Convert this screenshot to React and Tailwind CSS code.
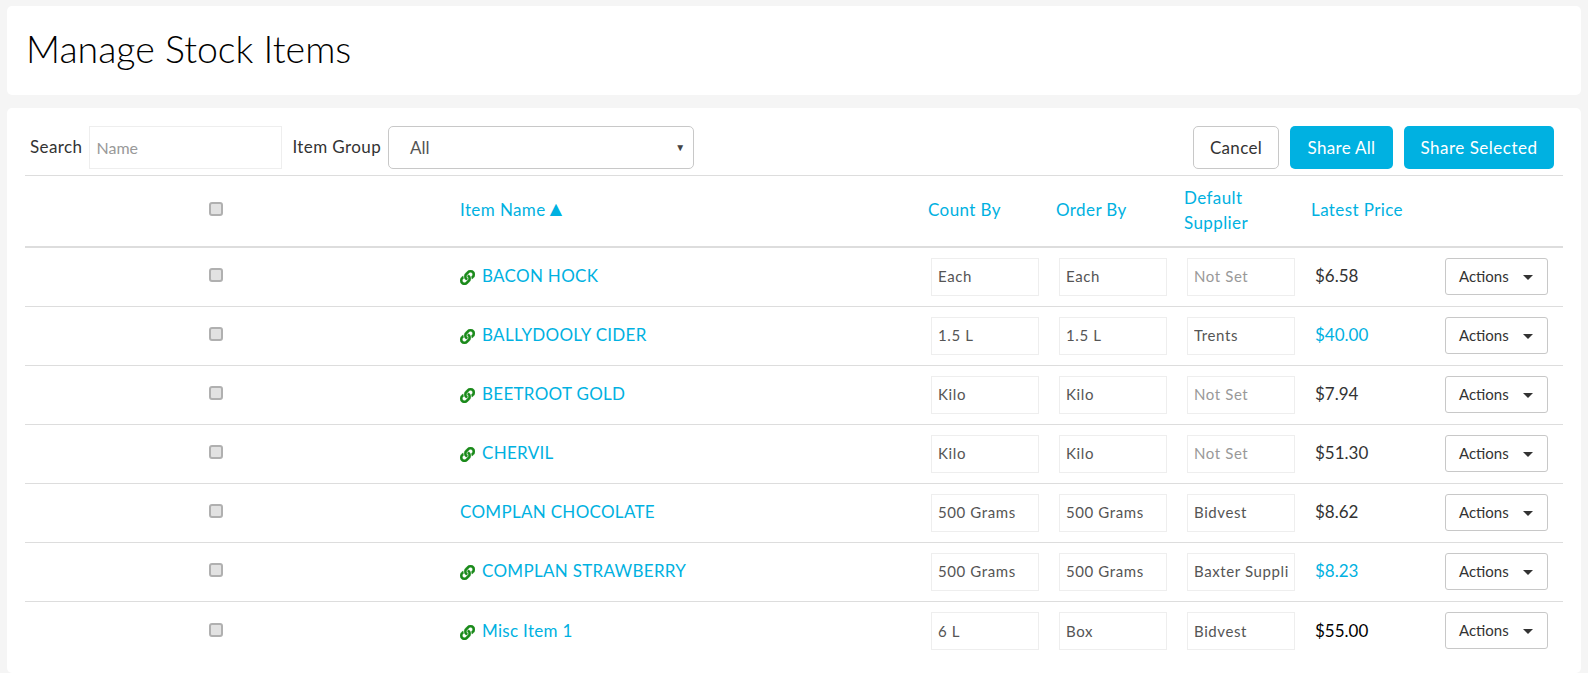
import { FaLink } from 'react-icons/fa'

const items = [
  { name: 'BACON HOCK', linked: true, count: 'Each', order: 'Each', supplier: '', price: '$6.58', tone: 'text-[#333]' },
  { name: 'BALLYDOOLY CIDER', linked: true, count: '1.5 L', order: '1.5 L', supplier: 'Trents', price: '$40.00', tone: 'text-[#00b1e1]' },
  { name: 'BEETROOT GOLD', linked: true, count: 'Kilo', order: 'Kilo', supplier: '', price: '$7.94', tone: 'text-[#333]' },
  { name: 'CHERVIL', linked: true, count: 'Kilo', order: 'Kilo', supplier: '', price: '$51.30', tone: 'text-[#333]' },
  { name: 'COMPLAN CHOCOLATE', linked: false, count: '500 Grams', order: '500 Grams', supplier: 'Bidvest', price: '$8.62', tone: 'text-[#333]' },
  { name: 'COMPLAN STRAWBERRY', linked: true, count: '500 Grams', order: '500 Grams', supplier: 'Baxter Supplies', price: '$8.23', tone: 'text-[#00b1e1]' },
  { name: 'Misc Item 1', linked: true, count: '6 L', order: 'Box', supplier: 'Bidvest', price: '$55.00', tone: 'text-black' },
]

const cols = 'grid grid-cols-[381px_522px_128px_128px_128px_133px_116px] items-center'

function Check() {
  return <input type="checkbox" readOnly className="appearance-none block w-[14px] h-[14px] mx-auto mb-[4px] rounded-[3px] border-2 border-[#b0b0b0] bg-[#e2e2e2]" />
}

function Field({ value, placeholder }) {
  return (
    <input
      readOnly
      value={value}
      placeholder={placeholder}
      className="w-[108px] h-[38px] ml-[3px] mb-[1px] border border-[#eeeeee] bg-white px-[6px] pb-[1px] text-[15px] tracking-[0.6px] text-[#555] placeholder:text-[#999] outline-none"
    />
  )
}

export default function App() {
  return (
    <div className="h-[673px] overflow-hidden bg-[#f5f5f5] px-[7px] pt-[6px] font-['Lato','Liberation_Sans',sans-serif]">
      <div className="h-[89px] rounded-[5px] bg-white pl-[19px] pt-[20px]">
        <h1 className="text-[37.5px] leading-[46px] font-light text-black">Manage Stock Items</h1>
      </div>

      <div className="mt-[13px] h-[565px] rounded-[5px] bg-white px-[18px] pt-[18px] pb-4">
        {/* Toolbar */}
        <div className="flex items-center h-[43px] mb-[6px]">
          <label className="ml-[5px] mr-[7px] mb-[2px] text-[17px] tracking-[0.4px] text-[#333]">Search</label>
          <input placeholder="Name" className="w-[193px] h-[43px] border border-[#eeeeee] px-[6px] text-[16px] outline-none placeholder:text-[#999]" />
          <label className="ml-[10px] mr-[7px] mb-[2px] text-[17px] tracking-[0.4px] text-[#333]">Item Group</label>
          <div className="relative w-[306px] h-[43px] rounded-[5px] border border-[#c8c8c8] flex items-center pl-[21px] text-[17px] text-[#555]">
            All
            <span className="absolute right-[8px] top-[13px] text-[10px] text-[#444]">▼</span>
          </div>
          <div className="ml-auto flex gap-[11px] mr-[9px]">
            <button className="w-[86px] h-[43px] rounded-[5px] border border-[#c8c8c8] bg-white text-[17px] tracking-[0.3px] text-[#333]">Cancel</button>
            <button className="w-[103px] h-[43px] rounded-[5px] bg-[#00b1e1] text-[17px] tracking-[0.3px] text-white">Share All</button>
            <button className="w-[150px] h-[43px] rounded-[5px] bg-[#00b1e1] text-[17px] tracking-[0.5px] text-white">Share Selected</button>
          </div>
        </div>

        {/* Header */}
        <div className={`${cols} h-[73px] border-t border-b-2 border-[#dddddd] text-[17px] tracking-[0.4px] text-[#00b1e1]`}>
          <Check />
          <div className="pl-[54px] mb-[3px]">Item Name<span className="text-[21px] leading-none tracking-normal">▲</span></div>
          <div className="mb-[3px]">Count By</div>
          <div className="mb-[3px]">Order By</div>
          <div className="leading-[25px] mb-[3px]">Default<br />Supplier</div>
          <div className="mb-[3px] -ml-[1px]">Latest Price</div>
          <div />
        </div>

        {/* Rows */}
        {items.map(item => (
          <div key={item.name} className={`${cols} h-[59px] border-b border-[#dddddd] last:border-b-0`}>
            <Check />
            <div className="pl-[54px] flex items-center text-[17px] tracking-[0.3px] text-[#00b1e1] mb-[2px]">
              {item.linked && <FaLink className="mr-[7px] mt-[3px] text-[15px] text-[#1a8a1a]" stroke="currentColor" strokeWidth={14} />}
              <span>{item.name}</span>
            </div>
            <Field value={item.count} />
            <Field value={item.order} />
            <Field value={item.supplier} placeholder="Not Set" />
            <div className={`pl-[3px] mb-[2px] text-[17px] ${item.tone}`}>{item.price}</div>
            <button className="w-[103px] h-[37px] mb-[2px] rounded-[3px] border border-[#c8c8c8] bg-white flex items-center pl-[13px] text-[15px] text-[#333]">
              Actions
              <span className="ml-[14px] mt-[2px] w-0 h-0 border-x-[5px] border-x-transparent border-t-[5px] border-t-[#333]" />
            </button>
          </div>
        ))}
      </div>
    </div>
  )
}
